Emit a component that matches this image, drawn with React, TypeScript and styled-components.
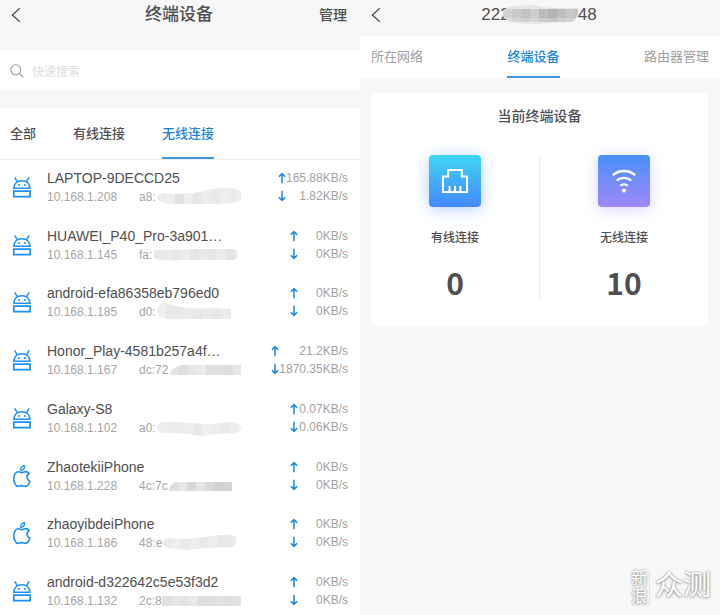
import React from "react";
import styled, { createGlobalStyle } from "styled-components";

const GlobalStyle = createGlobalStyle`
  * { box-sizing: border-box; }
  body {
    margin: 0;
    background: #f7f7f7;
    color: #505050;
    font-family: "Liberation Sans", "Noto Sans CJK SC", sans-serif;
  }
  button, input { font: inherit; color: inherit; }
  h1, h2, p, ul { margin: 0; padding: 0; }
`;

const Page = styled.div`
  display: flex;
  min-height: 100vh;
  position: relative;
`;

const Screen = styled.section`
  flex: 1 1 0;
  min-width: 0;
  display: flex;
  flex-direction: column;
  background: #f7f7f7;
`;

const Header = styled.header<{ $tall?: boolean }>`
  display: grid;
  grid-template-columns: 1fr auto 1fr;
  align-items: center;
  padding: 3px 13px ${(p) => (p.$tall ? 24 : 9)}px 11px;
`;

const PlainButton = styled.button`
  padding: 0;
  border: 0;
  background: none;
  cursor: pointer;
`;

const BackButton = styled(PlainButton)`
  justify-self: start;
  display: flex;
`;

const ManageButton = styled(PlainButton)`
  justify-self: end;
  font-size: 14px;
  line-height: 20px;
  font-weight: 500;
`;

const Title = styled.h1`
  display: flex;
  align-items: center;
  height: 24px;
  font-size: 17px;
  line-height: 24px;
  font-weight: 500;
`;

const TitleMask = styled.svg`
  display: block;
  margin-left: -7px;
`;

const SearchBar = styled.label`
  display: flex;
  align-items: center;
  gap: 8px;
  height: 39px;
  padding: 0 10px;
  margin-bottom: 18px;
  background: #fff;
`;

const SearchInput = styled.input`
  flex: 1;
  min-width: 0;
  padding: 2px 0 0;
  border: 0;
  outline: 0;
  background: none;
  font-size: 12px;
  line-height: 18px;
  &::placeholder { color: #dedede; opacity: 1; }
`;

const FilterTabs = styled.nav`
  display: flex;
  gap: 37px;
  padding: 0 10px;
  background: #fff;
  border-bottom: 1px solid #eeeeee;
`;

const RouterTabs = styled.nav`
  display: flex;
  justify-content: space-between;
  padding: 0 11px;
  background: #fff;
`;

const Tab = styled(PlainButton)<{ $active?: boolean; $muted?: boolean; $height: number }>`
  height: ${(p) => p.$height}px;
  padding: 2px 0 0;
  border-bottom: 2px solid ${(p) => (p.$active ? "#3f97dc" : "transparent")};
  color: ${(p) => (p.$active ? "#1a86dc" : p.$muted ? "#a0a0a0" : "#505050")};
  font-size: 13px;
  line-height: 18px;
  font-weight: ${(p) => (p.$muted ? 400 : 500)};
  white-space: nowrap;
`;

const DeviceList = styled.ul`
  flex: 1;
  display: flex;
  flex-direction: column;
  justify-content: space-between;
  padding: 8px 12px 5px;
  background: #fff;
  list-style: none;
`;

const DeviceRow = styled.li`
  display: flex;
  align-items: center;
  gap: 15px;
`;

const DeviceText = styled.div`
  flex: 1;
  min-width: 0;
`;

const DeviceName = styled.p`
  font-size: 14px;
  line-height: 20px;
  white-space: nowrap;
`;

const Address = styled.div`
  display: grid;
  grid-template-columns: 92px 1fr;
  font-size: 12px;
  line-height: 18px;
  color: #a6a6a6;
`;

const Mac = styled.span`
  display: flex;
  align-items: center;
  height: 18px;
`;

const MacPrefix = styled.span<{ $width: number }>`
  width: ${(p) => p.$width}px;
  white-space: nowrap;
`;

const MaskSvg = styled.svg`
  display: block;
  flex: none;
  margin: -2px 0;
`;

const Speeds = styled.div`
  display: grid;
  grid-template-columns: 8px minmax(50px, auto);
  align-items: center;
  font-size: 12px;
  line-height: 18px;
  color: #a2a2a2;
`;

const SpeedValue = styled.span`
  text-align: right;
`;

const Card = styled.div`
  margin: 15px 12px 0 11px;
  padding: 13px 0 25px;
  border-radius: 4px;
  background: #fff;
`;

const CardTitle = styled.h2`
  font-size: 14px;
  line-height: 20px;
  font-weight: 500;
  text-align: center;
`;

const Stats = styled.div`
  display: grid;
  grid-template-columns: 1fr 1px 1fr;
  margin-top: 29px;
`;

const Divider = styled.div`
  background: #ededed;
`;

const Stat = styled.div`
  display: flex;
  flex-direction: column;
  align-items: center;
`;

const StatTile = styled.div<{ $kind: "wired" | "wireless" }>`
  display: flex;
  align-items: center;
  justify-content: center;
  width: 52px;
  height: 52px;
  border-radius: 4px;
  background: ${(p) =>
    p.$kind === "wired"
      ? "linear-gradient(#3fd6f0, #4588ff)"
      : "linear-gradient(#4890f8, #9f88f8)"};
  box-shadow: 0 2px 16px
    ${(p) => (p.$kind === "wired" ? "rgba(69, 136, 255, 0.4)" : "rgba(150, 110, 248, 0.32)")};
`;

const StatLabel = styled.p`
  margin-top: 22px;
  font-size: 12px;
  line-height: 18px;
  font-weight: 500;
`;

const StatValue = styled.p`
  margin-top: 17px;
  padding-bottom: 1px;
  font-family: "Noto Sans CJK SC", sans-serif;
  font-size: 30px;
  line-height: 36px;
  font-weight: 700;
`;

const Watermark = styled.div`
  position: absolute;
  right: 9px;
  bottom: 7px;
  display: flex;
  align-items: center;
  gap: 5px;
  color: #fff;
  text-shadow: 0 0 2px #8c8c8c, 0 1px 3px #a0a0a0;
  pointer-events: none;
`;

const WatermarkSmall = styled.span`
  width: 19px;
  padding-right: 1px;
  border-right: 1px solid #e4e4e4;
  font-size: 17px;
  line-height: 18px;
`;

const WatermarkLarge = styled.span`
  font-size: 28px;
  line-height: 36px;
  padding-bottom: 4px;
`;

const BackIcon = () => (
  <svg width="10" height="16" viewBox="0 0 10 16" fill="none" stroke="#4c4c4c" strokeWidth="1.2" aria-hidden="true">
    <path d="M8.8 1.2 1.3 8l7.5 6.8" />
  </svg>
);

const SearchIcon = () => (
  <svg width="14" height="14" viewBox="0 0 14 14" fill="none" stroke="#9c9c9c" strokeWidth="1.1" aria-hidden="true">
    <circle cx="5.8" cy="5.8" r="5" />
    <path d="m9.4 9.4 4 4" />
  </svg>
);

const AndroidIcon = () => (
  <svg width="20" height="22" viewBox="0 0 20 22" fill="none" stroke="#1e90fa" strokeWidth="1.6" aria-hidden="true">
    <path d="M1.9 12.300C1.900 7.600 5.200 4.700 9.900 4.700s8 2.900 8 7.600Z" />
    <path d="M2.700 1.400 5.200 5.600M17.100 1.400l-2.500 4.200" strokeWidth="1.500" />
    <path d="M1.800 15.200h16.300v5.400H1.800Z" strokeWidth="1.700" />
    <circle cx="6.900" cy="8.900" r="1" fill="#1e90fa" stroke="none" />
    <circle cx="12.900" cy="8.900" r="1" fill="#1e90fa" stroke="none" />
  </svg>
);

const AppleIcon = () => (
  <svg width="20" height="24" viewBox="0 0 20 24" fill="none" stroke="#1e90fa" strokeWidth="1.6" strokeLinejoin="round" aria-hidden="true">
    <path d="M9.400 8.600c1.500 0 2.400-1 4.200-1 1.500 0 2.800.7 3.600 1.900-3.200 2-2.800 6.300.7 7.700-.8 2.500-2.500 5.200-4.500 5.200-1.400 0-1.900-.8-3.700-.8s-2.300.8-3.700.8C3.700 22.400 1.800 18.200 1.800 14.400c0-4.100 2.300-6.700 4.700-6.700 1.300 0 2 .9 2.900.9Z" />
    <path d="M8.800 6.300C8.600 3.800 10.300 2 12.500 1.700c.2 2.500-1.400 4.300-3.700 4.600Z" strokeWidth="1.300" />
  </svg>
);

const ArrowIcon = ({ down }: { down?: boolean }) => (
  <svg width="8" height="12" viewBox="0 0 8 12" fill="none" stroke="#1a88e4" strokeWidth="1.5" role="img" aria-label={down ? "下载" : "上传"}>
    <path d={down ? "M4 .8v9.400M.9 7.300 4 10.400l3.100-3.100" : "M4 11.200V1.800M.9 4.700 4 1.600l3.100 3.100"} />
  </svg>
);

const PortIcon = () => (
  <svg width="26" height="24" viewBox="0 0 26 24" fill="none" stroke="#fff" strokeWidth="2" aria-hidden="true">
    <path d="M1 23V7.500h5.200V1h13.600v6.500H25V23Z" />
    <path d="M7.600 22v-5M13 22v-5M18.400 22v-5" />
  </svg>
);

const WifiIcon = () => (
  <svg width="24" height="24" viewBox="0 0 24 24" fill="none" stroke="#fff" strokeWidth="2.300" aria-hidden="true">
    <path d="M.8 6.200c6.400-5.600 16-5.600 22.400 0M4.700 11.700c4.300-3.700 10.300-3.700 14.600 0M8.400 16.800c2.100-2 5.100-2 7.200 0" />
    <circle cx="12" cy="21.600" r="2.100" fill="#fff" stroke="none" />
  </svg>
);

interface Mask {
  shape: string;
  width: number;
  tones: string[];
}

/* Pixelated strip that hides the private part of a hardware address. */
const AddressMask = ({ id, mask }: { id: string; mask: Mask }) => (
  <MaskSvg width={mask.width} height="22" viewBox={`0 0 ${mask.width} 22`} aria-hidden="true">
    <clipPath id={id}>
      <path d={mask.shape} />
    </clipPath>
    <g clipPath={`url(#${id})`}>
      {mask.tones.map((tone, i) => (
        <rect key={i} x={i * 9} y="0" width="9" height="22" fill={tone} />
      ))}
    </g>
  </MaskSvg>
);

interface Device {
  os: "android" | "apple";
  name: string;
  ip: string;
  mac: string;
  macWidth: number;
  up: string;
  down: string;
  mask: Mask;
}

const devices: Device[] = [
  { os: "android", name: "LAPTOP-9DECCD25", ip: "10.168.1.208", mac: "a8:", macWidth: 18, up: "165.88KB/s", down: "1.82KB/s",
    mask: { width: 84, shape: "M0 11C1 6 8 7 20 8L36 7C48 5 55 2 68 2c11 0 16 2 16 6v7c-10 3-20 3-34 3-20 0-30 1-42-1-5-1-8-3-8-6Z",
      tones: ["#ececec", "#efefef", "#e2e2e2", "#ededed", "#e6e6e6", "#ececec", "#e9e9e9", "#eeeeee", "#ebebeb", "#eeeeee"] } },
  { os: "android", name: "HUAWEI_P40_Pro-3a901…", ip: "10.168.1.145", mac: "fa:", macWidth: 15, up: "0KB/s", down: "0KB/s",
    mask: { width: 84, shape: "M0 6C14 5 28 6 40 5h38c8 0 8 11 0 11H26C20 17 6 17 0 14Z",
      tones: ["#e9e9e9", "#ebebeb", "#e7e7e7", "#ececec", "#e4e4e4", "#eaeaea", "#e6e6e6", "#ebebeb", "#e4e4e4", "#ececec"] } },
  { os: "android", name: "android-efa86358eb796ed0", ip: "10.168.1.185", mac: "d0:", macWidth: 18, up: "0KB/s", down: "0KB/s",
    mask: { width: 76, shape: "M4 3c6-3 10 2 20 3 14 3 28 0 50 2v10H28C12 19 4 18 2 14-1 10 0 5 4 3Z",
      tones: ["#efefef", "#e9e9e9", "#e8e8e8", "#ececec", "#e7e7e7", "#ebebeb", "#e8e8e8", "#ebebeb", "#e9e9e9"] } },
  { os: "android", name: "Honor_Play-4581b257a4f…", ip: "10.168.1.167", mac: "dc:72", macWidth: 31, up: "21.2KB/s", down: "1870.35KB/s",
    mask: { width: 71, shape: "M0 15C2 8 8 6 14 6h57v10H0Z",
      tones: ["#e5e5e5", "#dedede", "#e6e6e6", "#ebebeb", "#dfdfdf", "#e1e1e1", "#dddddd", "#e6e6e6"] } },
  { os: "android", name: "Galaxy-S8", ip: "10.168.1.102", mac: "a0:", macWidth: 18, up: "0.07KB/s", down: "0.06KB/s",
    mask: { width: 84, shape: "M4 5c18-1 30 2 46 2 12 0 20-3 28-1 8 1 8 9 0 10-12 1-20 0-30 3-14 0-20-4-42-3-8-1-8-9-2-11Z",
      tones: ["#eeeeee", "#ececec", "#ebebeb", "#eeeeee", "#e8e8e8", "#efefef", "#ececec", "#e9e9e9", "#eeeeee", "#efefef"] } },
  { os: "apple", name: "ZhaotekiiPhone", ip: "10.168.1.228", mac: "4c:7c", macWidth: 30, up: "0KB/s", down: "0KB/s",
    mask: { width: 63, shape: "M0 15C1 8 5 7 12 7h51v9H0Z",
      tones: ["#dedede", "#e6e6e6", "#d7d7d7", "#e4e4e4", "#d9d9d9", "#d1d1d1", "#d4d4d4"] } },
  { os: "apple", name: "zhaoyibdeiPhone", ip: "10.168.1.186", mac: "48:e", macWidth: 24, up: "0KB/s", down: "0KB/s",
    mask: { width: 74, shape: "M2 7c8-2 20 1 32-1 12-1 22-4 34-3 8 1 7 11 0 12-14 1-24 0-34 2-12 2-22 0-28-1-8-1-7-7-4-9Z",
      tones: ["#eaeaea", "#eeeeee", "#e9e9e9", "#eeeeee", "#e9e9e9", "#ededed", "#e7e7e7", "#e9e9e9", "#eeeeee"] } },
  { os: "android", name: "android-d322642c5e53f3d2", ip: "10.168.1.132", mac: "2c:8", macWidth: 23, up: "0KB/s", down: "0KB/s",
    mask: { width: 79, shape: "M0 6h79v10H0Z",
      tones: ["#e0e0e0", "#e6e6e6", "#e3e3e3", "#e9e9e9", "#dedede", "#dfdfdf", "#e1e1e1", "#dfdfdf", "#e2e2e2"] } },
];

const titleTones = ["#d2d2d2", "#c9c9c9", "#c2c2c2", "#cecece", "#bcbcbc", "#b3b3b3", "#bebebe", "#c8c8c8", "#c0c0c0"];

export default function App() {
  return (
    <>
      <GlobalStyle />
      <Page>
        <Screen>
          <Header $tall>
            <BackButton type="button" aria-label="返回"><BackIcon /></BackButton>
            <Title>终端设备</Title>
            <ManageButton type="button">管理</ManageButton>
          </Header>
          <SearchBar>
            <SearchIcon />
            <SearchInput type="text" placeholder="快速搜索" aria-label="快速搜索" />
          </SearchBar>
          <FilterTabs>
            <Tab type="button" $height={51}>全部</Tab>
            <Tab type="button" $height={51}>有线连接</Tab>
            <Tab type="button" $height={51} $active>无线连接</Tab>
          </FilterTabs>
          <DeviceList>
            {devices.map((d, i) => (
              <DeviceRow key={d.ip}>
                {d.os === "android" ? <AndroidIcon /> : <AppleIcon />}
                <DeviceText>
                  <DeviceName>{d.name}</DeviceName>
                  <Address>
                    <span>{d.ip}</span>
                    <Mac>
                      <MacPrefix $width={d.macWidth}>{d.mac}</MacPrefix>
                      <AddressMask id={`mask-${i}`} mask={d.mask} />
                    </Mac>
                  </Address>
                </DeviceText>
                <Speeds>
                  <ArrowIcon />
                  <SpeedValue>{d.up}</SpeedValue>
                  <ArrowIcon down />
                  <SpeedValue>{d.down}</SpeedValue>
                </Speeds>
              </DeviceRow>
            ))}
          </DeviceList>
        </Screen>

        <Screen>
          <Header>
            <BackButton type="button" aria-label="返回"><BackIcon /></BackButton>
            <Title>
              222
              <TitleMask width="75" height="20" viewBox="0 0 75 20" aria-hidden="true">
                <clipPath id="title-mask">
                  <path d="M2 4C8 0 16 1 26 0c10 0 14 3 24 3h25c0 8-2 14-9 14-12 0-20 1-34 2-14 0-22-1-28-4-5-3-5-8-2-11Z" />
                </clipPath>
                <g clipPath="url(#title-mask)">
                  <rect width="75" height="20" fill="#e6e6e6" />
                  {titleTones.map((tone, i) => (
                    <React.Fragment key={i}>
                      <rect x={i * 9} y="4" width="9" height="9" fill={tone} />
                      <rect x={i * 9} y="13" width="9" height="4" fill={tone} opacity="0.6" />
                    </React.Fragment>
                  ))}
                </g>
              </TitleMask>
              48
            </Title>
          </Header>
          <RouterTabs>
            <Tab type="button" $height={42} $muted>所在网络</Tab>
            <Tab type="button" $height={42} $active>终端设备</Tab>
            <Tab type="button" $height={42} $muted>路由器管理</Tab>
          </RouterTabs>
          <Card>
            <CardTitle>当前终端设备</CardTitle>
            <Stats>
              <Stat>
                <StatTile $kind="wired"><PortIcon /></StatTile>
                <StatLabel>有线连接</StatLabel>
                <StatValue>0</StatValue>
              </Stat>
              <Divider />
              <Stat>
                <StatTile $kind="wireless"><WifiIcon /></StatTile>
                <StatLabel>无线连接</StatLabel>
                <StatValue>10</StatValue>
              </Stat>
            </Stats>
          </Card>
        </Screen>

        <Watermark>
          <WatermarkSmall>新浪</WatermarkSmall>
          <WatermarkLarge>众测</WatermarkLarge>
        </Watermark>
      </Page>
    </>
  );
}
